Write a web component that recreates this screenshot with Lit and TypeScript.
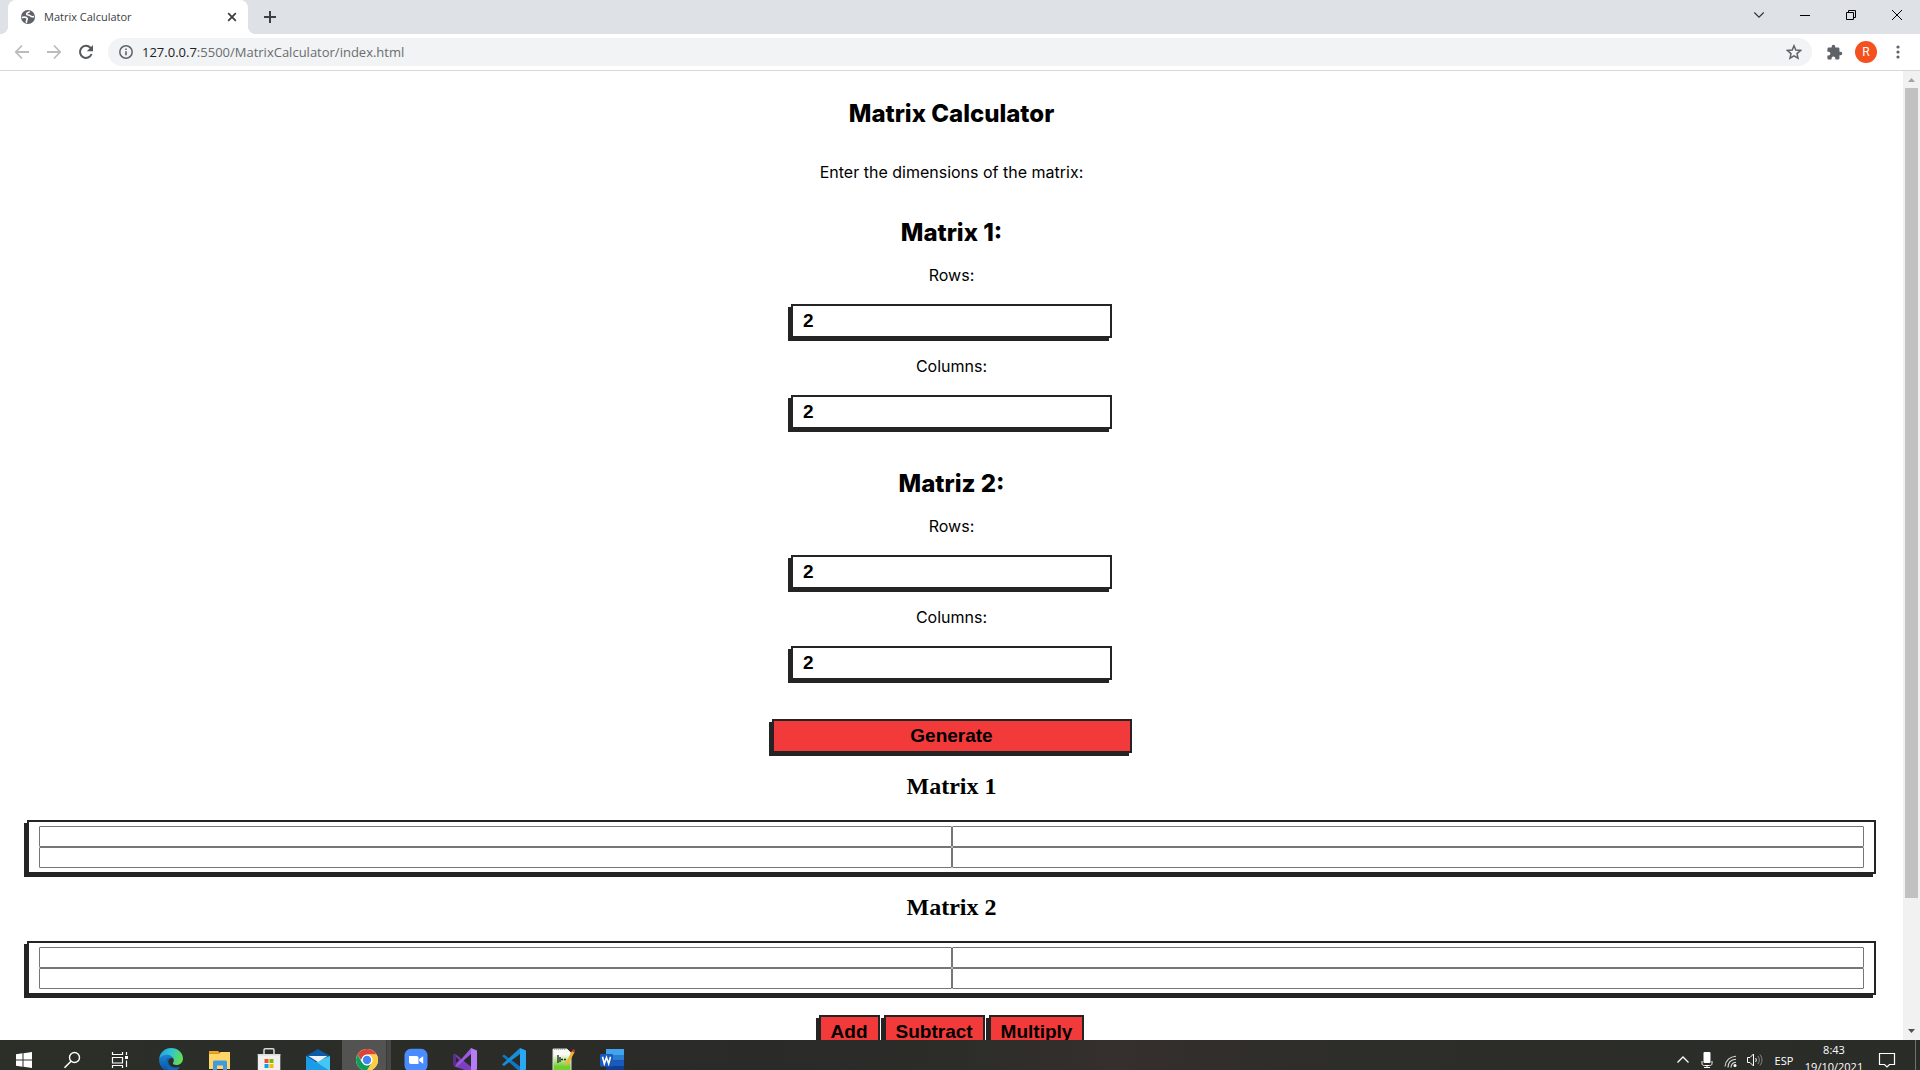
import { LitElement, html, css, svg, nothing } from "lit";
import { customElement, property } from "lit/decorators.js";

const icon = (size: number, box: string, body: unknown) => html`<svg
  class="icon" width=${size} height=${size} viewBox=${box} fill="none" aria-hidden="true">${body}</svg>`;

@customElement("browser-chrome")
class BrowserChrome extends LitElement {
  static styles = css`
    :host { display: block; font-family: "Open Sans", "Noto Sans", sans-serif; color: #3c4043; }
    .icon { display: block; flex: none; }
    button { border: 0; padding: 0; margin: 0; background: none; display: grid; place-items: center; flex: none; }
    .strip { display: flex; height: 34px; background: #dee1e6; padding-left: 8px; }
    .tab { position: relative; display: flex; align-items: center; box-sizing: border-box; width: 240px; height: 34px;
      padding: 0 8px 0 12px; gap: 8px; background: #fff; border-radius: 8px 8px 0 0; font-size: 11px; line-height: 16px; }
    .tab::before, .tab::after { content: ""; position: absolute; bottom: 0; width: 8px; height: 8px; }
    .tab::before { left: -8px; background: radial-gradient(circle at 0 0, #dee1e6 8px, #fff 8px); }
    .tab::after { right: -8px; background: radial-gradient(circle at 100% 0, #dee1e6 8px, #fff 8px); }
    .name { flex: 1; }
    .close { width: 16px; height: 16px; }
    .new { width: 28px; height: 34px; margin-left: 8px; }
    .controls { display: flex; margin-left: auto; }
    .controls button { width: 46px; height: 29px; }
    .bar { display: flex; align-items: center; height: 36px; padding: 0 8px; border-bottom: 1px solid #d5d7da; }
    .nav { width: 28px; height: 28px; margin-right: 4px; }
    .address { flex: 1; display: flex; align-items: center; height: 28px; margin-left: 4px; padding: 0 10px;
      border-radius: 14px; background: #f1f3f4; gap: 8px; color: #5f6368; }
    .url { flex: 1; font-size: 13px; line-height: 20px; color: #6a6d71; }
    .host { color: #202124; }
    .tool { width: 28px; height: 28px; }
    .tools { display: flex; gap: 4px; padding-left: 8px; }
    .avatar { width: 22px; height: 22px; margin: 3px; border-radius: 50%; background: #f4511e; color: #fff;
      font: 12px/22px Roboto, sans-serif; }
  `;
  render() {
    return html`
      <div class="strip">
        <div class="tab">
          ${icon(16, "0 0 16 16", svg`<circle cx="8" cy="8" r="7" fill="#5f6368"/><path d="M1.800 8.500C4 8 6.500 8 7.200 9.300c.5 1-.8 1.500-.6 2.700.1.800-.2 1.300-.8 1.600M9.500 2.300c-.2 1.500-2.900 1-2.900 2.600 0 1.500 2.600.8 3.600 1.900.9 1 2 1.200 3.800.8" stroke="#fff" stroke-width="1.600"/>`)}
          <span class="name">Matrix Calculator</span>
          <button class="close" aria-label="Close tab">${icon(16, "0 0 16 16", svg`<path d="M4.200 4.200l7.600 7.600M11.800 4.200l-7.600 7.600" stroke="#3c4043" stroke-width="1.800"/>`)}</button>
        </div>
        <button class="new" aria-label="New tab">${icon(14, "0 0 14 14", svg`<path d="M7 1v12M1 7h12" stroke="#3c4043" stroke-width="2"/>`)}</button>
        <div class="controls">
          <button aria-label="Search tabs">${icon(12, "0 0 12 12", svg`<path d="M1.300 3.500L6 8.200l4.700-4.700" stroke="#333" stroke-width="1.200"/>`)}</button>
          <button aria-label="Minimize">${icon(10, "0 0 10 10", svg`<path d="M0 5.500h10" stroke="#000"/>`)}</button>
          <button aria-label="Restore">${icon(10, "0 0 10 10", svg`<path d="M.5 2.500h7v7h-7zM2.500 2.500v-2h7v7h-2" stroke="#000"/>`)}</button>
          <button aria-label="Close window">${icon(10, "0 0 10 10", svg`<path d="M0 0l10 10M10 0L0 10" stroke="#000"/>`)}</button>
        </div>
      </div>
      <div class="bar">
        <button class="nav" aria-label="Back">${icon(16, "0 0 16 16", svg`<path d="M15 8H2M8 1.500L1.800 8 8 14.500" stroke="#babcbe" stroke-width="1.800"/>`)}</button>
        <button class="nav" aria-label="Forward">${icon(16, "0 0 16 16", svg`<path d="M1 8h13M8 1.500L14.200 8 8 14.500" stroke="#babcbe" stroke-width="1.800"/>`)}</button>
        <button class="nav" aria-label="Reload">${icon(16, "0 0 16 16", svg`<path d="M13.600 10a6 6 0 1 1-1.200-6.200L13.800 5" stroke="#55585c" stroke-width="2"/><path d="M15 1v6.200H8.800z" fill="#55585c"/>`)}</button>
        <div class="address">
          ${icon(16, "0 0 16 16", svg`<circle cx="8" cy="8" r="6.200" stroke="#5f6368" stroke-width="1.500"/><path d="M8 7.200v4M8 4.500v1.600" stroke="#5f6368" stroke-width="1.600"/>`)}
          <span class="url"><span class="host">127.0.0.7</span>:5500/MatrixCalculator/index.html</span>
          ${icon(16, "0 0 16 16", svg`<path d="M8 1.800l1.800 4.300 4.700.4-3.500 3.100 1 4.600-4-2.400-4 2.400 1-4.600-3.500-3.100 4.700-.4z" stroke="#5f6368" stroke-width="1.500"/>`)}
        </div>
        <div class="tools">
          <button class="tool" aria-label="Extensions">${icon(17, "0 0 24 24", svg`<path fill="#5f6368" d="M20.500 11H19V7a2 2 0 0 0-2-2h-4V3.500a2.500 2.500 0 0 0-5 0V5H4a2 2 0 0 0-2 2v3.800h1.500a2.700 2.700 0 0 1 0 5.400H2V20c0 1.100.9 2 2 2h3.800v-1.500a2.700 2.700 0 0 1 5.400 0V22H17a2 2 0 0 0 2-2v-4h1.500a2.500 2.500 0 0 0 0-5z"/>`)}</button>
          <button class="avatar" aria-label="Profile">R</button>
          <button class="tool" aria-label="Menu">${icon(16, "0 0 16 16", svg`<g fill="#5f6368"><circle cx="8" cy="3" r="1.600"/><circle cx="8" cy="8" r="1.600"/><circle cx="8" cy="13" r="1.600"/></g>`)}</button>
        </div>
      </div>`;
  }
}

const boxed = css`
  .boxed { box-sizing: border-box; border: 2px solid #242424; box-shadow: -3px 3px 0 #242424; border-radius: 0; }
`;

@customElement("matrix-dimensions")
class MatrixDimensions extends LitElement {
  @property() heading = "";
  static styles = [boxed, css`
    :host { display: block; }
    .group { display: flex; flex-direction: column; align-items: center; }
    h2 { margin: 0; font-size: 24px; line-height: 28px; font-weight: 800; }
    label { margin: 18px 0 19px; line-height: 20px; }
    input { width: 321px; height: 34px; margin: 0; padding: 0 10px; background: #fff; color: #000;
      font: bold 19px "Liberation Sans", Arial, sans-serif; outline: 0; appearance: textfield; }
    input::-webkit-inner-spin-button { appearance: none; margin: 0; }
  `];
  render() {
    return html`<div class="group">
      <h2>${this.heading}</h2>
      <label for="rows">Rows:</label>
      <input class="boxed" id="rows" type="number" value="2" />
      <label for="columns">Columns:</label>
      <input class="boxed" id="columns" type="number" value="2" />
    </div>`;
  }
}

@customElement("matrix-entry")
class MatrixEntry extends LitElement {
  @property() heading = "";
  static styles = [boxed, css`
    :host { display: block; }
    h2 { margin: 0 0 20px; text-align: center; font: bold 24px/28px "Liberation Serif", "Times New Roman", serif; }
    .cells { display: grid; grid-template-columns: 1fr 1fr; padding: 4px 10px; background: #fff; }
    input { box-sizing: border-box; width: 100%; min-width: 0; height: 21px; margin: 0; padding: 0 2px;
      border: 1px solid #767676; border-radius: 1px; font: 13px "Liberation Sans", Arial, sans-serif; outline: 0; }
  `];
  render() {
    return html`<h2>${this.heading}</h2>
      <div class="cells boxed">
        ${[1, 2].map((r) => [1, 2].map((c) => html`<input type="number" aria-label="${this.heading}, row ${r}, column ${c}" />`))}
      </div>`;
  }
}

@customElement("calculator-page")
class CalculatorPage extends LitElement {
  static styles = [boxed, css`
    :host { display: flex; min-height: 0; overflow: hidden; background: #fff; color: #000; font: 16px/20px Inter, sans-serif; }
    main { flex: 1; min-width: 0; padding: 29px 27px 0; display: flex; flex-direction: column; }
    main > * { flex: none; }
    h1 { margin: 0; text-align: center; font-size: 24px; line-height: 28px; font-weight: 800; }
    .lead { margin: 34px 0 37px; text-align: center; }
    .second { margin-top: 41px; }
    button { height: 34px; padding: 0 10px; background: #f23a3a; color: #000; font: bold 19px "Liberation Sans", Arial, sans-serif; }
    .generate { align-self: center; width: 360px; margin: 39px 0 19px; }
    .next { margin-top: 19px; }
    .actions { display: flex; justify-content: center; gap: 4px; margin-top: 20px; }
    .scroll { display: flex; flex-direction: column; flex: none; width: 17px; background: #f1f1f1; align-items: center; }
    .scroll svg { display: block; flex: none; }
    .track { flex: 1; width: 13px; display: grid; grid-template-rows: 13fr 2fr; }
    .thumb { background: #c1c1c1; }
  `];
  render() {
    return html`<main>
        <h1>Matrix Calculator</h1>
        <p class="lead">Enter the dimensions of the matrix:</p>
        <matrix-dimensions heading="Matrix 1:"></matrix-dimensions>
        <matrix-dimensions class="second" heading="Matriz 2:"></matrix-dimensions>
        <button class="boxed generate">Generate</button>
        <matrix-entry heading="Matrix 1"></matrix-entry>
        <matrix-entry class="next" heading="Matrix 2"></matrix-entry>
        <div class="actions">
          <button class="boxed">Add</button><button class="boxed">Subtract</button><button class="boxed">Multiply</button>
        </div>
      </main>
      <div class="scroll">
        <svg width="17" height="17" viewBox="0 0 17 17"><path d="M5 11l3.500-4 3.500 4z" fill="#a3a3a3"/></svg>
        <div class="track"><div class="thumb"></div></div>
        <svg width="17" height="17" viewBox="0 0 17 17"><path d="M5 6l3.500 4L12 6z" fill="#505050"/></svg>
      </div>`;
  }
}

const system: { name: string; art: unknown }[] = [
  { name: "Start", art: svg`<path fill="#fff" d="M4 6.200l6.500-.9v6.200H4zM11.500 5.200L20 4v7.500h-8.500zM4 12.500h6.500v6.200L4 17.800zM11.500 12.500H20V20l-8.500-1.200z"/>` },
  { name: "Search", art: svg`<circle cx="14.500" cy="9.500" r="5" stroke="#fff" stroke-width="1.400"/><path d="M11 13.200l-6.500 6.600" stroke="#fff" stroke-width="1.500"/>` },
  { name: "Task view", art: svg`<path d="M4.500 4v2.500h10V4M4.500 20v-2.500h10V20M4.500 9.500h10v5.500h-10zM18.500 4v3M18.500 12.500V19" stroke="#fff" stroke-width="1.200"/><path fill="#fff" d="M17 8h3v3h-3z"/>` },
];

const apps: { name: string; active?: boolean; art: unknown }[] = [
  { name: "Edge", art: svg`
    <defs><linearGradient id="e1" x1="0" y1="0" x2="1" y2=".3"><stop stop-color="#1f9de0"/><stop offset=".5" stop-color="#2fc3d6"/><stop offset="1" stop-color="#5fdc5a"/></linearGradient>
    <linearGradient id="e2" x1="0" y1="0" x2="0" y2="1"><stop stop-color="#1b87d8"/><stop offset="1" stop-color="#0c50a0"/></linearGradient></defs>
    <path fill="url(#e2)" d="M0 12C1 7 6 5.500 10 6.500c3 .7 4 3 4 4-2-1.500-5 0-5 3 0 4 4 7 11 5.500C17 24 11 25 7 23 3 21 0 17 0 12z"/>
    <path fill="#1266b8" d="M9.500 9.500C5 12 5.500 20 12 23.700c3 .3 7-1.700 9-4.700-5 2-10 .5-11.500-3.500-.8-2.500 0-4.500 1.500-5.500z"/>
    <path fill="url(#e1)" d="M.2 11C1 4 6 0 12 0c7 0 12 5 12 10.500 0 4-3 6.500-6.500 6.500-2.500 0-4-1-3.500-2 1.500-2 1-5-1.500-6.800C8.500 5.500 2.500 7 .2 11z"/>` },
  { name: "File Explorer", art: svg`<path fill="#d99a1c" d="M1 3h9l2 2h10v5H1z"/><path fill="#e8a823" d="M1 3h9l1 2H1z"/><path fill="#ffd667" d="M1 6h10l1.500-2H22v17H1z"/><path fill="#3f9ae0" d="M5 22v-8c0-1 .7-1.500 1.500-1.500h11c.8 0 1.500.5 1.500 1.500v8h-4v-4.500H9V22z"/>` },
  { name: "Store", art: svg`<path d="M7 7V2c0-.8.4-1.200 1.200-1.200h7.600c.8 0 1.200.4 1.200 1.200v5" stroke="#d8d8d8" stroke-width="1.500"/><path fill="#f0f0f0" d="M.8 6h22.500v17H.8z"/><path fill="#dcdcdc" d="M.8 6h22.500v1.500H.8z"/><path fill="#f25022" d="M7.500 11h4v4h-4z"/><path fill="#7fba00" d="M12.500 11h4v4h-4z"/><path fill="#00a4ef" d="M7.500 16h4v4h-4z"/><path fill="#ffb900" d="M12.500 16h4v4h-4z"/>` },
  { name: "Mail", art: svg`<path fill="#0d5aa7" d="M0 8l12-7 12 7v5H0z"/><path fill="#1c9be6" d="M0 8l12 7L24 8v15H0z"/><path fill="#43c6f6" d="M24 8v15L10 14z"/><path fill="#eef2f5" d="M2.500 8h19L12 14z"/>` },
  { name: "Chrome", active: true, art: svg`<circle cx="12" cy="12" r="11" fill="#fff"/><path fill="#db4437" d="M2.500 6.500A11 11 0 0 1 21.500 6.500H12a5.500 5.500 0 0 0-5 3.500l-1 2z"/><path fill="#0f9d58" d="M2.500 6.500A11 11 0 0 0 12 23l4.800-8.300a5.500 5.500 0 0 1-9.600 0z"/><path fill="#ffcd40" d="M21.500 6.500A11 11 0 0 1 11.500 23l5.300-8.200a5.500 5.500 0 0 0-4.800-8.300z"/><circle cx="12" cy="12" r="5.200" fill="#fff"/><circle cx="12" cy="12" r="4.200" fill="#4285f4"/>` },
  { name: "Zoom", art: svg`<rect x=".5" y=".8" width="23" height="23" rx="6.500" fill="#4a8cff"/><path fill="#fff" d="M5 8h7.500c1.200 0 2 .8 2 2v6H7c-1.200 0-2-.8-2-2zM15.300 11l3.900-2.800v7.600L15.300 13z"/>` },
  { name: "Visual Studio", art: svg`<path fill="#7b3fc0" d="M0 7l2-1.200 16 13V24L1.500 18.500z"/><path fill="#5c2d91" d="M0 7l3-1v12l-3-1z"/><path fill="#9a5be0" d="M2 18.500L18 0v6L4 18.500z"/><path fill="#2b2a29" d="M3 8.800v6.400L6.300 12z"/><path fill="#b47cf5" d="M18 0l6 2.500v19L18 24z"/><path fill="#2b2a29" d="M18 7.500v9L11.500 12z"/>` },
  { name: "Visual Studio Code", art: svg`<path fill="#0f78c2" d="M0 8l2-1.500L18 18.500V24z"/><path fill="#178fd8" d="M0 16.500L18 0v6L2 18z"/><path fill="#2aa8f2" d="M18 0l6 2.500v19L18 24z"/><path fill="#2b2a29" d="M18 7v10l-7-5z"/>` },
  { name: "Notepad++", art: svg`<defs><linearGradient id="n" x1="0" y1="0" x2="0" y2="1"><stop offset=".25" stop-color="#fbfbf5"/><stop offset=".8" stop-color="#72cf30"/></linearGradient></defs><path d="M2 1h14l4 4v18H2z" fill="url(#n)" stroke="#ddd"/><path d="M3 1h11" stroke="#777" stroke-dasharray="1 1"/><path d="M7 7v8M9 9v5M10 11.500h2M13 11.500h2" stroke="#222" stroke-width="1.300"/><path d="M14 18l.6-3L21 3l2.500 1.200L17 16.500z" fill="#f0b429"/><path d="M21 3l1-2 2.500 1.200-1 2z" fill="#b33"/>` },
  { name: "Word", art: svg`<path fill="#41a5ee" d="M6 1h18v6H6z"/><path fill="#2b7cd3" d="M6 7h18v5.500H6z"/><path fill="#185abd" d="M6 12.500h18V18H6z"/><path fill="#103f91" d="M6 18h18v5H6z"/><rect y="6" width="13" height="12.500" rx="1" fill="#185abd"/><path d="M2.500 8.800l1.800 7 2.200-6.300 2.200 6.300 1.800-7" stroke="#fff" stroke-width="1.600"/>` },
];

@customElement("task-bar")
class TaskBar extends LitElement {
  static styles = css`
    :host { display: block; height: 30px; overflow: hidden; color: #fff;
      background: linear-gradient(90deg, #2c2e28, #2a2b28 40%, #2c2d29 50%, #352f2d 58%, #2d2d29 70%, #2a2d27);
      font: 11px/17px "Open Sans", "Noto Sans", sans-serif; }
    .row { display: flex; height: 40px; }
    button { border: 0; margin: 0; padding: 0; background: none; color: inherit; font: inherit; display: grid; place-items: center; flex: none; }
    svg { display: block; }
    .system { display: flex; margin-right: 2px; }
    .sys { width: 48px; }
    .app { width: 49px; }
    .active { background: linear-gradient(90deg, #535351 44px, #3a3a38 44px, #3a3a38 45px, #474745 45px); }
    .tray { display: flex; margin-left: auto; }
    .small { width: 24px; }
    .lang { width: 34px; }
    .clock { width: 66px; display: block; text-align: center; padding-top: 1px; align-self: flex-start; }
    .notice { width: 40px; }
    .show { width: 5px; margin-left: 8px; border-left: 1px solid #72736f; }
  `;
  render() {
    return html`<div class="row">
      <div class="system">${system.map((a) => html`<button class="sys" aria-label=${a.name}>${icon(24, "0 0 24 24", a.art)}</button>`)}</div>
      ${apps.map((a) => html`<button class=${a.active ? "app active" : "app"} aria-label=${a.name}>${icon(24, "0 0 24 24", a.art)}</button>`)}
      <div class="tray">
        <button class="small" aria-label="Hidden icons">${icon(16, "0 0 16 16", svg`<path d="M2.500 10.500L8 5l5.500 5.500" stroke="#fff" stroke-width="1.300"/>`)}</button>
        <button class="small" aria-label="Microphone">${icon(16, "0 0 16 16", svg`<rect x="4.500" width="7" height="11" rx="1" fill="#fff"/><path d="M3 9v2.500C3 13 4 13.500 5.500 13.500h5c1.500 0 2.500-.5 2.500-2V9M8 13.500V16M5 15.500h6" stroke="#fff"/>`)}</button>
        <button class="small" aria-label="Network">${icon(16, "0 0 16 16", svg`<circle cx="12" cy="13.500" r="1.500" fill="#fff"/><path d="M8 15.500c0-3 1.500-5 5-5.300M5 15.500c0-5 3-8 8-8.300M2 14.500c.5-6 5-10 11-10.300" stroke="#ddd" stroke-width="1.100"/>`)}</button>
        <button class="small" aria-label="Volume">${icon(16, "0 0 16 16", svg`<path d="M.5 5.500H3L6.500 2v12L3 10.500H.5z" stroke="#fff"/><path d="M8.500 6c1 1 1 3 0 4" stroke="#fff"/><path d="M10.800 4c2 2.500 2 5.500 0 8M13 2.500c2.600 3.500 2.600 7.500 0 11" stroke="#888"/>`)}</button>
        <button class="lang">ESP</button>
        <button class="clock">8:43<br />19/10/2021</button>
        <button class="notice" aria-label="Notifications">${icon(18, "0 0 18 18", svg`<path d="M1.500 2.500h15v11h-5L9 16l-2.500-2.500h-5z" stroke="#fff" stroke-width="1.200"/>`)}</button>
        <button class="show" aria-label="Show desktop">${nothing}</button>
      </div>
    </div>`;
  }
}

@customElement("app-root")
class AppRoot extends LitElement {
  static styles = css`
    :host { display: block; }
    .desktop { display: grid; grid-template-rows: auto minmax(0, 1fr) auto; height: 100vh; overflow: hidden; }
  `;
  render() {
    return html`<div class="desktop">
      <browser-chrome></browser-chrome>
      <calculator-page></calculator-page>
      <task-bar></task-bar>
    </div>`;
  }
}
